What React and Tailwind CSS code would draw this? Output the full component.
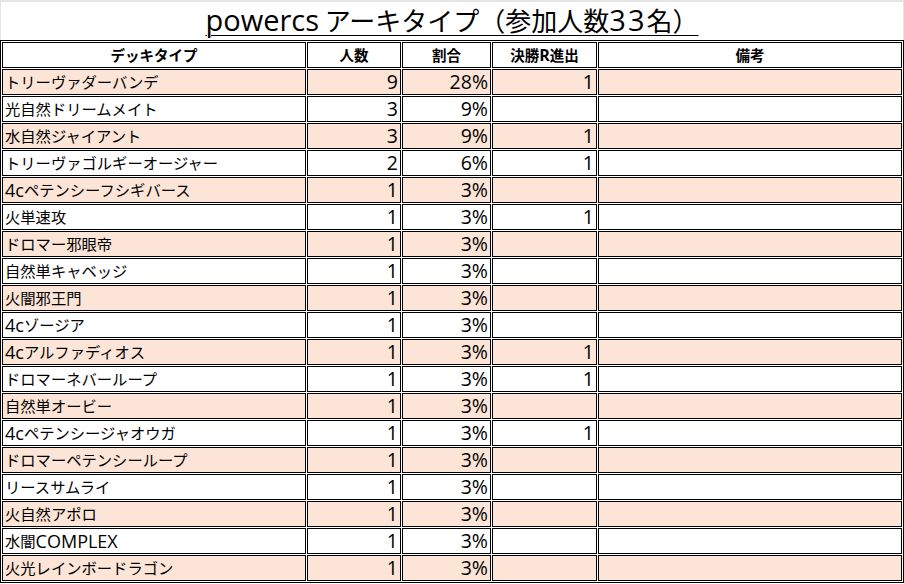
import React from "react";

const rows = [
  ["トリーヴァダーバンデ", "9", "28%", "1"],
  ["光自然ドリームメイト", "3", "9%", ""],
  ["水自然ジャイアント", "3", "9%", "1"],
  ["トリーヴァゴルギーオージャー", "2", "6%", "1"],
  ["4cペテンシーフシギバース", "1", "3%", ""],
  ["火単速攻", "1", "3%", "1"],
  ["ドロマー邪眼帝", "1", "3%", ""],
  ["自然単キャベッジ", "1", "3%", ""],
  ["火闇邪王門", "1", "3%", ""],
  ["4cゾージア", "1", "3%", ""],
  ["4cアルファディオス", "1", "3%", "1"],
  ["ドロマーネバーループ", "1", "3%", "1"],
  ["自然単オービー", "1", "3%", ""],
  ["4cペテンシージャオウガ", "1", "3%", "1"],
  ["ドロマーペテンシーループ", "1", "3%", ""],
  ["リースサムライ", "1", "3%", ""],
  ["火自然アポロ", "1", "3%", ""],
  ["水闇COMPLEX", "1", "3%", ""],
  ["火光レインボードラゴン", "1", "3%", ""],
];

const cjk = { fontFamily: '"Noto Sans CJK JP", "Noto Sans", sans-serif' };
const latin = { fontFamily: '"Open Sans", "Noto Sans", sans-serif' };

function Mixed({ text, latinClass }) {
  const parts = text.split(/([A-Za-z0-9%]+)/).filter(Boolean);
  return (
    <>
      {parts.map((p, i) =>
        /^[A-Za-z0-9%]+$/.test(p) ? (
          <span key={i} className={latinClass} style={latin}>
            {p}
          </span>
        ) : (
          <span key={i}>{p}</span>
        )
      )}
    </>
  );
}

export default function App() {
  return (
    <div className="w-[904px] h-[584px] bg-white text-black overflow-hidden" style={cjk}>
      <div className="h-[40px] pt-[1px] border-t-2 border-l border-r border-[#e4e4e4] flex items-start justify-center">
        <span className="text-[26px] leading-[33px] underline underline-offset-[4px] decoration-1 whitespace-nowrap">
          <span className="text-[29px]" style={latin}>powercs</span>
          <span> アーキタイプ（参加人数</span>
          <span className="text-[29px] tracking-[2px]" style={latin}>33</span>
          <span>名）</span>
        </span>
      </div>
      <div className="border border-black p-px grid grid-cols-[304px_94px_89px_105px_304px] gap-px">
        {["デッキタイプ", "人数", "割合", "決勝R進出", "備考"].map((h) => (
          <div
            key={h}
            className="h-[26px] border border-black flex items-center justify-center font-bold text-[14.5px] leading-none whitespace-nowrap"
          >
            <Mixed text={h} latinClass="text-[16px] font-bold" />
          </div>
        ))}
        {rows.map((r, i) => {
          const bg = i % 2 === 0 ? "bg-[#fce4d6]" : "bg-white";
          return (
            <React.Fragment key={i}>
              <div className={`h-[26px] border border-black ${bg} flex items-center pl-[2px] text-[15.3px] leading-none whitespace-nowrap`}>
                <Mixed text={r[0]} latinClass="text-[18px]" />
              </div>
              {[r[1], r[2], r[3]].map((v, j) => (
                <div
                  key={j}
                  className={`h-[26px] border border-black ${bg} flex items-center justify-end pr-[2px] text-[19.5px] leading-none`}
                  style={latin}
                >
                  {v}
                </div>
              ))}
              <div className={`h-[26px] border border-black ${bg}`}></div>
            </React.Fragment>
          );
        })}
      </div>
    </div>
  );
}
